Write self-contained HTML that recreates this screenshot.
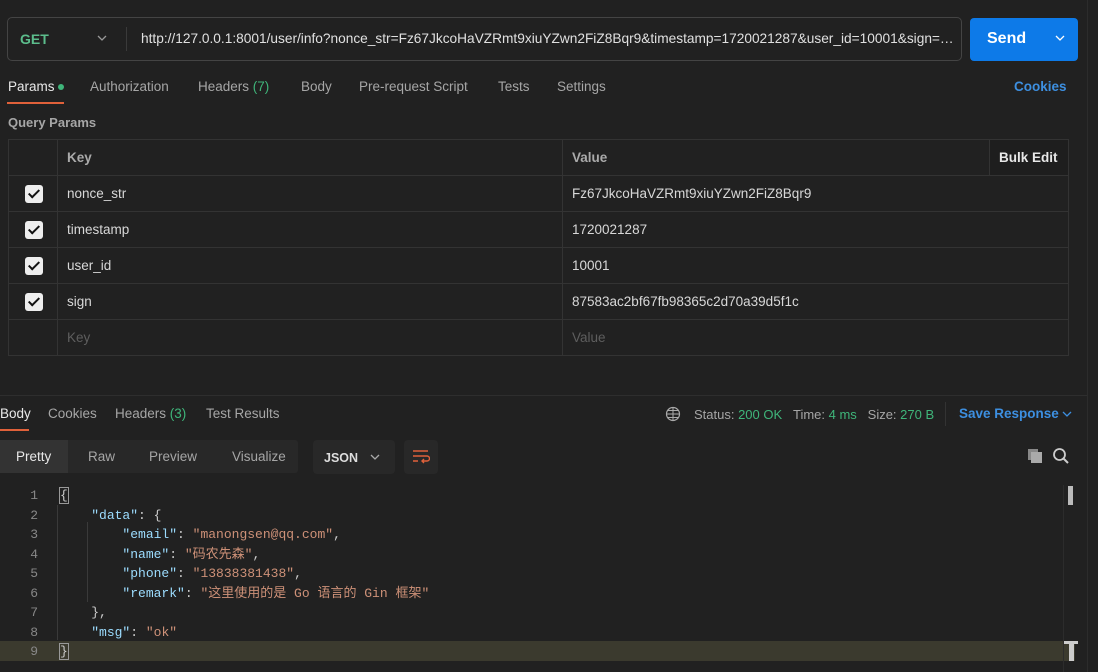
<!DOCTYPE html>
<html><head><meta charset="utf-8"><style>
*{box-sizing:border-box;margin:0;padding:0}
body{width:1098px;height:672px;background:#212121;font-family:"Liberation Sans","Noto Sans CJK SC",sans-serif;color:#d0d0d0;position:relative;overflow:hidden;font-size:13px}
.a{position:absolute;white-space:nowrap}
.g{color:#3fb57a}.mut{color:#a6a6a6}
.mono{font-family:"Liberation Mono","Noto Sans CJK SC",monospace;font-size:13px}
table{position:absolute;left:8px;top:139px;width:1061px;border-collapse:collapse}
td{border:1px solid #333;height:36px;padding:0 9px;color:#d8d8d8;font-size:13.5px}
.cb{width:18px;height:18px;background:#eee;border-radius:3px;margin-left:16px;position:relative}
.cb:after{content:"";position:absolute;left:6px;top:2px;width:4px;height:9px;border:solid #111;border-width:0 2.5px 2.5px 0;transform:rotate(45deg)}
</style></head><body>
<div class="a" style="left:1087px;top:0;width:1px;height:672px;background:#2c2c2c"></div>
<div class="a" style="left:7px;top:17px;width:955px;height:44px;border:1px solid #444;border-radius:5px;background:#212121"></div>
<div class="a" style="left:20px;top:31px;font-weight:bold;color:#5cbd8c;font-size:14px">GET</div>
<svg class="a" style="left:97px;top:35px" width="10" height="7"><path d="M1 1l4 4 4-4" stroke="#999" fill="none" stroke-width="1.3"/></svg>
<div class="a" style="left:126px;top:27px;width:1px;height:24px;background:#3a3a3a"></div>
<div class="a" style="left:141px;top:31px;font-size:13.7px;color:#e0e0e0;width:813px;overflow:hidden;text-overflow:ellipsis">http://127.0.0.1:8001/user/info?nonce_str=Fz67JkcoHaVZRmt9xiuYZwn2FiZ8Bqr9&amp;timestamp=1720021287&amp;user_id=10001&amp;sign=87583ac2bf67fb98365c2d70a39d5f1c</div>
<div class="a" style="left:970px;top:18px;width:108px;height:43px;background:#0d7ae8;border-radius:4px"></div>
<div class="a" style="left:987px;top:30px;font-size:16px;font-weight:bold;color:#fff">Send</div>
<svg class="a" style="left:1055px;top:35px" width="10" height="7"><path d="M1 1l4 4 4-4" stroke="#fff" fill="none" stroke-width="1.3"/></svg>
<div class="a" style="left:8px;top:79px;font-size:13.5px;color:#e8e8e8">Params</div>
<div class="a" style="left:58px;top:84px;width:6px;height:6px;border-radius:50%;background:#3fb57a"></div>
<div class="a" style="left:7px;top:102px;width:57px;height:2px;background:#e0613a"></div>
<div class="a mut" style="left:90px;top:79px;font-size:13.5px">Authorization</div>
<div class="a mut" style="left:198px;top:79px;font-size:13.5px">Headers <span class="g">(7)</span></div>
<div class="a mut" style="left:301px;top:79px;font-size:13.5px">Body</div>
<div class="a mut" style="left:359px;top:79px;font-size:13.5px">Pre-request Script</div>
<div class="a mut" style="left:498px;top:79px;font-size:13.5px">Tests</div>
<div class="a mut" style="left:557px;top:79px;font-size:13.5px">Settings</div>
<div class="a" style="left:1014px;top:79px;font-size:13.5px;color:#3d8fe0;font-weight:bold">Cookies</div>
<div class="a mut" style="left:8px;top:115px;font-weight:bold">Query Params</div>
<table>
<tr><td style="width:49px"></td><td style="width:505px;color:#aaa;font-weight:bold">Key</td><td style="color:#aaa;font-weight:bold;border-right:none">Value</td><td style="width:79px;font-weight:bold;color:#e8e8e8;background:#1e1e1e">Bulk Edit</td></tr>
<tr><td style="padding:0"><div class="cb"></div></td><td>nonce_str</td><td colspan="2">Fz67JkcoHaVZRmt9xiuYZwn2FiZ8Bqr9</td></tr>
<tr><td style="padding:0"><div class="cb"></div></td><td>timestamp</td><td colspan="2">1720021287</td></tr>
<tr><td style="padding:0"><div class="cb"></div></td><td>user_id</td><td colspan="2">10001</td></tr>
<tr><td style="padding:0"><div class="cb"></div></td><td>sign</td><td colspan="2">87583ac2bf67fb98365c2d70a39d5f1c</td></tr>
<tr><td></td><td style="color:#5e5e5e">Key</td><td colspan="2" style="color:#5e5e5e">Value</td></tr>
</table>
<div class="a" style="left:0;top:395px;width:1087px;height:1px;background:#2e2e2e"></div>
<div class="a" style="left:0;top:406px;font-size:13.5px;color:#e8e8e8">Body</div>
<div class="a" style="left:0;top:429px;width:29px;height:2px;background:#e0613a"></div>
<div class="a mut" style="left:48px;top:406px;font-size:13.5px">Cookies</div>
<div class="a mut" style="left:115px;top:406px;font-size:13.5px">Headers <span class="g">(3)</span></div>
<div class="a mut" style="left:206px;top:406px;font-size:13.5px">Test Results</div>
<svg class="a" style="left:665px;top:406px" width="16" height="16"><circle cx="8" cy="8" r="6.5" stroke="#aaa" fill="none" stroke-width="1.2"/><path d="M1.5 8h13M8 1.5v13M3 4.5h10M3 11.5h10" stroke="#aaa" stroke-width="1"/></svg>
<div class="a mut" style="left:694px;top:407px">Status: <span class="g">200 OK</span>&nbsp;&nbsp;&nbsp;Time: <span class="g">4 ms</span>&nbsp;&nbsp;&nbsp;Size: <span class="g">270 B</span></div>
<div class="a" style="left:945px;top:402px;width:1px;height:24px;background:#333"></div>
<div class="a" style="left:959px;top:406px;font-size:13.5px;color:#3d8fe0;font-weight:bold">Save Response</div>
<svg class="a" style="left:1062px;top:411px" width="10" height="7"><path d="M1 1l4 4 4-4" stroke="#3d8fe0" fill="none" stroke-width="1.3"/></svg>
<div class="a" style="left:0;top:440px;width:298px;height:33px;background:#282828;border-radius:3px"></div>
<div class="a" style="left:0;top:440px;width:68px;height:33px;background:#333"></div>
<div class="a" style="left:16px;top:449px;font-size:13.5px;color:#e8e8e8">Pretty</div>
<div class="a mut" style="left:88px;top:449px;font-size:13.5px">Raw</div>
<div class="a mut" style="left:149px;top:449px;font-size:13.5px">Preview</div>
<div class="a mut" style="left:232px;top:449px;font-size:13.5px">Visualize</div>
<div class="a" style="left:313px;top:440px;width:82px;height:34px;background:#282828;border-radius:4px"></div>
<div class="a" style="left:324px;top:451px;font-weight:bold;color:#ddd;font-size:12.5px">JSON</div>
<svg class="a" style="left:370px;top:454px" width="10" height="7"><path d="M1 1l4 4 4-4" stroke="#aaa" fill="none" stroke-width="1.3"/></svg>
<div class="a" style="left:404px;top:440px;width:34px;height:34px;background:#282828;border-radius:4px"></div>
<svg class="a" style="left:412px;top:449px" width="18" height="16"><path d="M1 2h15M1 7h14a2.5 2.5 0 0 1 0 5h-5M12 10l-2 2 2 2M1 12h5" stroke="#e0613a" fill="none" stroke-width="1.4"/></svg>
<svg class="a" style="left:1026px;top:447px" width="18" height="18"><rect x="2" y="2" width="10" height="11" fill="#888"/><rect x="5" y="5" width="11" height="11" fill="#aaa"/></svg>
<svg class="a" style="left:1052px;top:447px" width="18" height="18"><circle cx="7.5" cy="7.5" r="5.5" stroke="#ccc" fill="none" stroke-width="1.8"/><path d="M11.5 11.5l4.5 4.5" stroke="#ccc" stroke-width="2"/></svg>
<div class="a" style="left:0;top:641px;width:1075px;height:20px;background:#3b3a2e"></div>
<div class="a" style="left:57px;top:505px;width:1px;height:135px;background:#3a3a3a"></div>
<div class="a" style="left:87px;top:522px;width:1px;height:80px;background:#3a3a3a"></div>
<div class="a" style="left:1063px;top:485px;width:1px;height:187px;background:#2c2c2c"></div>
<div class="a" style="left:1068px;top:486px;width:5px;height:19px;background:#bbb"></div>
<div class="a" style="left:1064px;top:641px;width:14px;height:3px;background:#ccc"></div>
<div class="a" style="left:1069px;top:641px;width:5px;height:20px;background:#ccc"></div>
<div class="a mono" style="left:0;top:486px;line-height:19.5px;color:#888;width:38px;text-align:right">1<br>2<br>3<br>4<br>5<br>6<br>7<br>8<br>9</div>
<div class="a mono" style="left:60px;top:486px;line-height:19.5px;color:#ccc">
<span style="outline:1px solid #999">{</span><br>
&nbsp;&nbsp;&nbsp;&nbsp;<span style="color:#9cdcfe">"data"</span>: {<br>
&nbsp;&nbsp;&nbsp;&nbsp;&nbsp;&nbsp;&nbsp;&nbsp;<span style="color:#9cdcfe">"email"</span>: <span style="color:#ce9178">"manongsen@qq.com"</span>,<br>
&nbsp;&nbsp;&nbsp;&nbsp;&nbsp;&nbsp;&nbsp;&nbsp;<span style="color:#9cdcfe">"name"</span>: <span style="color:#ce9178">"码农先森"</span>,<br>
&nbsp;&nbsp;&nbsp;&nbsp;&nbsp;&nbsp;&nbsp;&nbsp;<span style="color:#9cdcfe">"phone"</span>: <span style="color:#ce9178">"13838381438"</span>,<br>
&nbsp;&nbsp;&nbsp;&nbsp;&nbsp;&nbsp;&nbsp;&nbsp;<span style="color:#9cdcfe">"remark"</span>: <span style="color:#ce9178">"这里使用的是 Go 语言的 Gin 框架"</span><br>
&nbsp;&nbsp;&nbsp;&nbsp;},<br>
&nbsp;&nbsp;&nbsp;&nbsp;<span style="color:#9cdcfe">"msg"</span>: <span style="color:#ce9178">"ok"</span><br>
<span style="outline:1px solid #999">}</span></div>
</body></html>
